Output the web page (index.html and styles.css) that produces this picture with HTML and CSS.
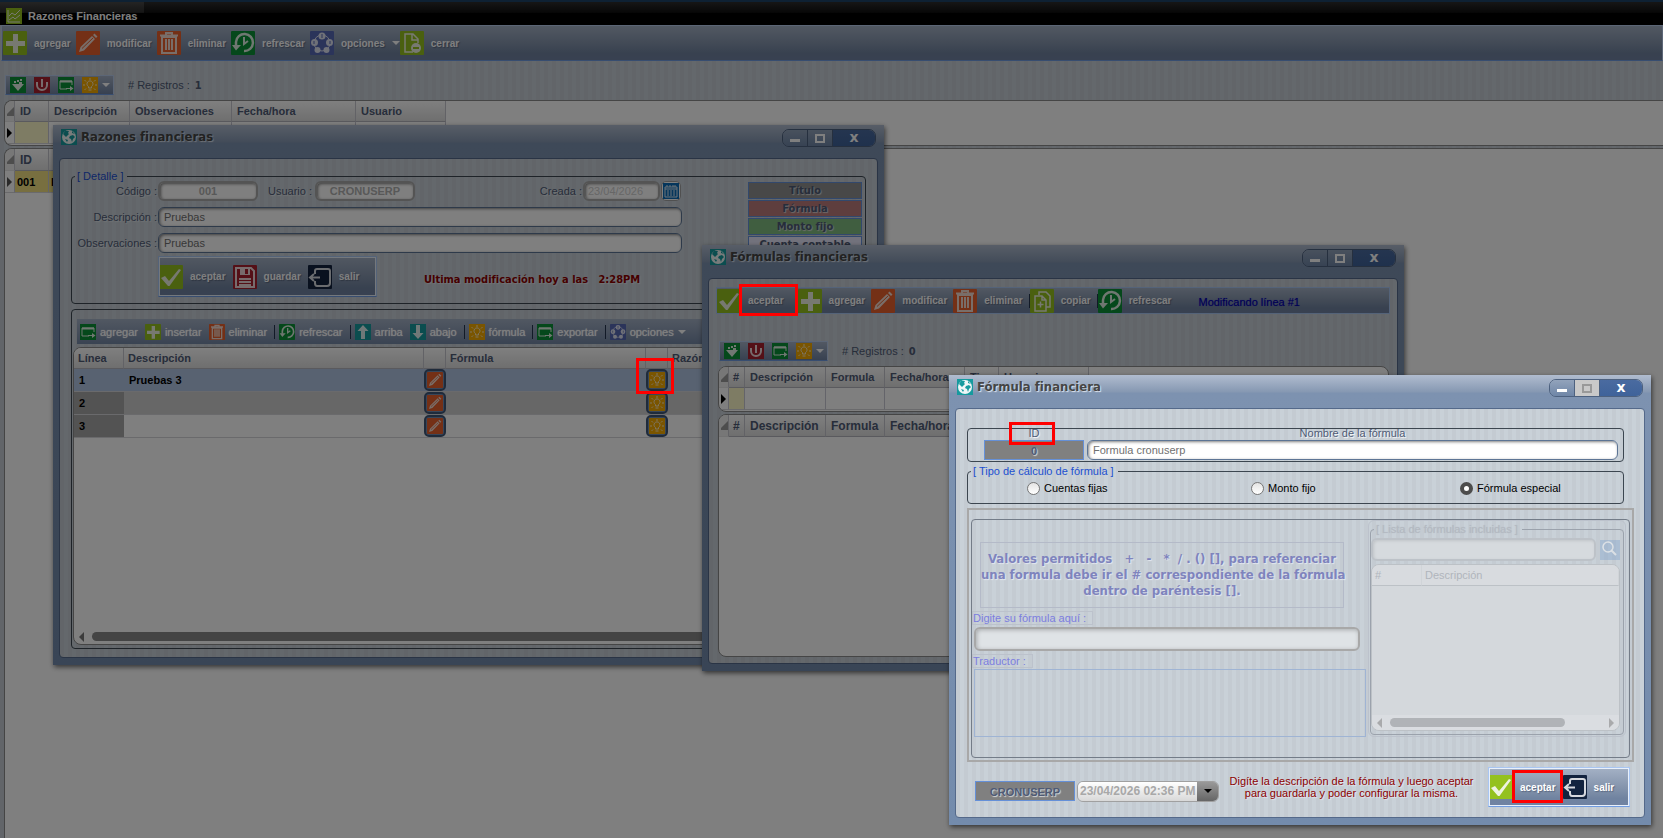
FILE: index.html
```html
<!DOCTYPE html>
<html lang="es">
<head>
    <meta charset="UTF-8">
    <meta name="viewport" content="width=device-width, initial-scale=1.0">
    <title>Razones Financieras</title>
    <link rel="stylesheet" href="styles.css">
</head>
<body>
    <svg class="sprite" aria-hidden="true">
        <symbol id="i-plus" viewBox="0 0 24 24"><rect width="24" height="24" rx="1" fill="#94c11f"/><path d="M10 3h5v7h7v5h-7v7h-5v-7H3v-5h7z" fill="#eef3e2"/></symbol>
        <symbol id="i-pencil" viewBox="0 0 24 24"><rect width="24" height="24" rx="1" fill="#e8602c"/><path d="M3 21l1.500-5L16 5l3 3L8 19.500zM17 4l1.500-1.500 3 3L20 7z" fill="#f3dcd2"/><path d="M6 17.500L17 7" stroke="#e8602c" fill="none"/></symbol>
        <symbol id="i-trash" viewBox="0 0 24 24"><rect width="24" height="24" rx="1" fill="#e8602c"/><path d="M3 4.500h18M9 4V2h6v2M5 6v16h14V6z" stroke="#f3dcd2" stroke-width="2" fill="none"/><path d="M9 8v11M12 8v11M15 8v11" stroke="#f3dcd2" stroke-width="2"/></symbol>
        <symbol id="i-refresh" viewBox="0 0 24 24"><rect width="24" height="24" rx="1" fill="#0b9136"/><path d="M5 14.500V11a8.500 8.500 0 1 1 8 9" stroke="#dfeee3" stroke-width="2.500" fill="none"/><path d="M1 14h9l-5 5.500z" fill="#dfeee3"/><path d="M13 6v7l4-3" stroke="#dfeee3" stroke-width="2" fill="none"/></symbol>
        <symbol id="i-options" viewBox="0 0 24 24"><rect width="24" height="24" rx="1" fill="#5768b4"/><circle cx="12" cy="12" r="8" stroke="#dfe2f0" fill="none"/><g fill="#dfe2f0"><circle cx="12" cy="5" r="3.500"/><circle cx="4.500" cy="11.500" r="3.500"/><circle cx="19.500" cy="11.500" r="3.500"/><circle cx="7.500" cy="19" r="3"/><circle cx="16.500" cy="19" r="3"/></g><path d="M12 3v4M4 10v3M20 10v3" stroke="#5768b4"/></symbol>
        <symbol id="i-close" viewBox="0 0 24 24"><rect width="24" height="24" rx="1" fill="#94c11f"/><path d="M13 21H5V3h8l5 5v4M12 3v6h6" stroke="#eef3e2" stroke-width="1.500" fill="none"/><circle cx="16" cy="17" r="5" fill="#eef3e2"/><path d="M13 17h6" stroke="#94c11f" stroke-width="2"/></symbol>
        <symbol id="i-check" viewBox="0 0 24 24"><rect width="24" height="24" rx="1" fill="#94c11f"/><path d="M2 13l4-2 4 5L20 4l2 1-11.500 16H9z" fill="#eef3e2"/></symbol>
        <symbol id="i-save" viewBox="0 0 24 24"><rect width="24" height="24" rx="1" fill="#a8202f"/><path d="M3 3h15l3 3v16H3z" stroke="#eed8da" stroke-width="2" fill="none"/><path d="M7 3h10v7H7z" fill="#eed8da"/><path d="M12 4h3v5h-3z" fill="#a8202f"/><path d="M6 14h12M6 17h12M6 20h12" stroke="#eed8da" stroke-width="2"/></symbol>
        <symbol id="i-exit" viewBox="0 0 24 24"><rect width="24" height="24" rx="1" fill="#12233f"/><path d="M7 9V6q0-2 2-2h11q2 0 2 2v12q0 3-3 3H9q-2 0-2-3v-2" stroke="#d5d8de" stroke-width="2" fill="none"/><path d="M12 12.500H3M6 9l-4 3.500L6 16" stroke="#d5d8de" stroke-width="2" fill="none"/></symbol>
        <symbol id="i-copy" viewBox="0 0 24 24"><rect width="24" height="24" rx="1" fill="#94c11f"/><path d="M9 6V3h7l4 4v11h-4M5 7h7l4 4v11H5zM12 7v4h4" stroke="#eef3e2" stroke-width="1.500" fill="none"/><path d="M10.500 12.500v6M7.500 15.500h6" stroke="#eef3e2" stroke-width="1.500"/></symbol>
        <symbol id="i-filter" viewBox="0 0 16 16"><rect width="16" height="16" fill="#0b9136"/><path d="M2 7h12l-6 7z" fill="#e4efe6"/><path d="M4 5h2M7 4h2M10 3h2M9 6h3" stroke="#e4efe6" stroke-width="2"/></symbol>
        <symbol id="i-power" viewBox="0 0 16 16"><rect width="16" height="16" fill="#a8202f"/><path d="M3 5v3a5 5 0 0 0 10 0V5M8 2v8" stroke="#eed8da" stroke-width="2" fill="none"/></symbol>
        <symbol id="i-export" viewBox="0 0 16 16"><rect width="16" height="16" fill="#0b9136"/><path d="M9 12H2V4h12v4" stroke="#dfeee3" fill="none"/><path d="M2 4.500h12" stroke="#dfeee3" stroke-width="2"/><path d="M8 11h4V9l3.500 2.500L12 14v-2H8z" fill="#dfeee3"/></symbol>
        <symbol id="i-bulb" viewBox="0 0 16 16"><rect width="16" height="16" fill="#f5ab00"/><path d="M6.500 11V9.500a3 3 0 1 1 3 0V11zM6.500 13h3" stroke="#fbe9c0" fill="none"/><path d="M8 1v2M2.500 3l1.500 1.500M13.500 3L12 4.500M1 8h2M13 8h2M2.500 13L4 11.500M13.500 13L12 11.500" stroke="#fbe9c0"/></symbol>
        <symbol id="i-up" viewBox="0 0 16 16"><rect width="16" height="16" fill="#169a9e"/><path d="M8 1l5.500 6H10v8H6V7H2.500z" fill="#dff0f1"/></symbol>
        <symbol id="i-down" viewBox="0 0 16 16"><rect width="16" height="16" fill="#169a9e"/><path d="M8 15L2.500 9H6V1h4v8h3.500z" fill="#dff0f1"/></symbol>
        <symbol id="i-globe" viewBox="0 0 16 16"><rect width="16" height="16" fill="#169a9e"/><circle cx="8" cy="8" r="7" fill="#eef6f7"/><path d="M2 5l2-3 4 0-1 2 1 1-2 2-1 1-2-2zM9 7l3-1 2 2-2 2-1 3-1-3-2-1zM11 2l3 3-3-1zM4 10l3 1-1 2z" fill="#169a9e"/></symbol>
        <symbol id="i-chart" viewBox="0 0 16 16"><rect width="16" height="16" fill="#94c11f"/><path d="M2 2v12h12M3 8l3-3 3 2 5-5M3 12l4-3 2 2 5-4" stroke="#eef3e2" fill="none"/></symbol>
        <symbol id="i-calendar" viewBox="0 0 16 16"><rect width="16" height="16" fill="#0a6cb8"/><path d="M2 4h12v10H2zM2 6h12M5 7v6M8 7v6M11 7v6" stroke="#dce8f3" fill="none"/><path d="M4 2v2M7 2v2M10 2v2M12 2v2" stroke="#dce8f3"/></symbol>
        <symbol id="i-search" viewBox="0 0 20 20"><rect width="20" height="20" fill="#7fa3cd"/><circle cx="8" cy="7" r="5" stroke="#fff" stroke-width="1.500" fill="none"/><path d="M11.500 10.500L16 15" stroke="#fff" stroke-width="2"/></symbol>
    </svg>

    <div class="desktop">
        <!-- pestaña principal -->
        <div class="tab-bar"><div class="tab"><svg class="ico16"><use href="#i-chart"/></svg>Razones Financieras</div></div>
        <div class="toolbar main-toolbar">
            <button class="tool"><svg><use href="#i-plus"/></svg>agregar</button>
            <button class="tool"><svg><use href="#i-pencil"/></svg>modificar</button>
            <button class="tool"><svg><use href="#i-trash"/></svg>eliminar</button>
            <button class="tool"><svg><use href="#i-refresh"/></svg>refrescar</button>
            <button class="tool has-arrow"><svg><use href="#i-options"/></svg>opciones<i class="arrow"></i></button>
            <button class="tool"><svg><use href="#i-close"/></svg>cerrar</button>
        </div>
        <div class="record-bar main-records">
            <div class="mini-toolbar">
                <button aria-label="filtrar"><svg class="ico16"><use href="#i-filter"/></svg></button>
                <button aria-label="quitar filtro"><svg class="ico16"><use href="#i-power"/></svg></button>
                <button aria-label="exportar"><svg class="ico16"><use href="#i-export"/></svg></button>
                <button aria-label="ayuda"><svg class="ico16"><use href="#i-bulb"/></svg></button>
                <i class="arrow"></i>
            </div>
            <span># Registros : </span><b>1</b>
        </div>
        <div class="main-grids">
            <div class="grid-box filter-box">
                <table class="grid main-grid">
                    <colgroup><col class="c-mark"><col class="c-id"><col class="c-desc"><col class="c-obs"><col class="c-date"><col class="c-user"></colgroup>
                    <tr><th class="corner"></th><th>ID</th><th>Descripción</th><th>Observaciones</th><th>Fecha/hora</th><th>Usuario</th></tr>
                    <tr><td class="mark"></td><td class="key"></td><td></td><td></td><td></td><td></td></tr>
                </table>
            </div>
            <div class="grid-box data-box">
                <table class="grid main-grid big">
                    <colgroup><col class="c-mark"><col class="c-id"><col class="c-desc"></colgroup>
                    <tr><th class="corner"></th><th>ID</th><th></th></tr>
                    <tr class="current"><td class="mark"></td><td>001</td><td>Pruebas</td></tr>
                </table>
            </div>
        </div>

        <section class="window win-ratios">
            <header class="title-bar">
                <svg class="ico16"><use href="#i-globe"/></svg><h2>Razones financieras</h2>
                <div class="controls"><button class="min" aria-label="minimizar"></button><button class="max" aria-label="maximizar"></button><button class="x" aria-label="cerrar">x</button></div>
            </header>
            <div class="client">
                <fieldset class="group detail">
                    <legend>[ Detalle ]</legend>
                    <div class="detail-main">
                        <div class="row">
                            <label for="codigo">Código :</label><input id="codigo" class="field code" value="001" disabled>
                            <label for="usuario" class="user-label">Usuario :</label><input id="usuario" class="field code" value="CRONUSERP" disabled>
                            <label for="creada" class="created-label">Creada :</label><input id="creada" class="field date" value="23/04/2026" disabled>
                            <button class="calendar" aria-label="calendario"><svg class="ico16"><use href="#i-calendar"/></svg></button>
                        </div>
                        <div class="row"><label for="desc">Descripción :</label><input id="desc" class="field wide" value="Pruebas"></div>
                        <div class="row"><label for="obs">Observaciones :</label><input id="obs" class="field wide" value="Pruebas"></div>
                        <div class="row actions">
                            <div class="toolbar boxed">
                                <button class="tool"><svg><use href="#i-check"/></svg>aceptar</button>
                                <button class="tool"><svg><use href="#i-save"/></svg>guardar</button>
                                <button class="tool"><svg><use href="#i-exit"/></svg>salir</button>
                            </div>
                            <p class="modified">Ultima modificación hoy a las&nbsp;&nbsp; 2:28PM</p>
                        </div>
                    </div>
                    <div class="legend-list">
                        <span class="k-title">Título</span><span class="k-formula">Fórmula</span><span class="k-fixed">Monto fijo</span><span class="k-account">Cuenta contable</span>
                    </div>
                </fieldset>
                <div class="group lines">
                    <div class="line-toolbar">
                        <button><svg class="ico16"><use href="#i-export"/></svg>agregar</button>
                        <button><svg class="ico16"><use href="#i-plus"/></svg>insertar</button>
                        <button><svg class="ico16"><use href="#i-trash"/></svg>eliminar</button>
                        <i class="sep"></i>
                        <button><svg class="ico16"><use href="#i-refresh"/></svg>refrescar</button>
                        <i class="sep"></i>
                        <button><svg class="ico16"><use href="#i-up"/></svg>arriba</button>
                        <button><svg class="ico16"><use href="#i-down"/></svg>abajo</button>
                        <i class="sep"></i>
                        <button><svg class="ico16"><use href="#i-bulb"/></svg>fórmula</button>
                        <i class="sep"></i>
                        <button><svg class="ico16"><use href="#i-export"/></svg>exportar</button>
                        <i class="sep"></i>
                        <button><svg class="ico16"><use href="#i-options"/></svg>opciones<i class="arrow"></i></button>
                    </div>
                    <div class="grid-box lines-box">
                        <table class="grid line-grid">
                            <colgroup><col class="l-line"><col class="l-desc"><col class="l-btn"><col class="l-formula"><col class="l-btn"><col></colgroup>
                            <tr><th>Línea</th><th>Descripción</th><th></th><th>Fórmula</th><th></th><th>Razón</th></tr>
                            <tr class="selected"><td>1</td><td>Pruebas 3</td><td><button class="cell"><svg class="ico16"><use href="#i-pencil"/></svg></button></td><td></td><td><button class="cell"><svg class="ico16"><use href="#i-bulb"/></svg></button></td><td></td></tr>
                            <tr class="alt"><td>2</td><td></td><td><button class="cell"><svg class="ico16"><use href="#i-pencil"/></svg></button></td><td></td><td><button class="cell"><svg class="ico16"><use href="#i-bulb"/></svg></button></td><td></td></tr>
                            <tr><td>3</td><td></td><td><button class="cell"><svg class="ico16"><use href="#i-pencil"/></svg></button></td><td></td><td><button class="cell"><svg class="ico16"><use href="#i-bulb"/></svg></button></td><td></td></tr>
                        </table>
                        <div class="scroll"><i class="left"></i><span class="thumb"></span></div>
                    </div>
                </div>
            </div>
        </section>

        <section class="window win-formulas">
            <header class="title-bar">
                <svg class="ico16"><use href="#i-globe"/></svg><h2>Fórmulas financieras</h2>
                <div class="controls"><button class="min" aria-label="minimizar"></button><button class="max" aria-label="maximizar"></button><button class="x" aria-label="cerrar">x</button></div>
            </header>
            <div class="client">
                <div class="toolbar formulas-toolbar">
                    <button class="tool accept"><svg><use href="#i-check"/></svg>aceptar</button>
                    <button class="tool"><svg><use href="#i-plus"/></svg>agregar</button>
                    <button class="tool"><svg><use href="#i-pencil"/></svg>modificar</button>
                    <button class="tool"><svg><use href="#i-trash"/></svg>eliminar</button>
                    <i class="sep"></i>
                    <button class="tool"><svg><use href="#i-copy"/></svg>copiar</button>
                    <i class="sep"></i>
                    <button class="tool"><svg><use href="#i-refresh"/></svg>refrescar</button>
                    <span class="editing">Modificando línea #1</span>
                </div>
                <div class="record-bar">
                    <div class="mini-toolbar">
                        <button aria-label="filtrar"><svg class="ico16"><use href="#i-filter"/></svg></button>
                        <button aria-label="quitar filtro"><svg class="ico16"><use href="#i-power"/></svg></button>
                        <button aria-label="exportar"><svg class="ico16"><use href="#i-export"/></svg></button>
                        <button aria-label="ayuda"><svg class="ico16"><use href="#i-bulb"/></svg></button>
                        <i class="arrow"></i>
                    </div>
                    <span># Registros : </span><b>0</b>
                </div>
                <div class="grid-box filter-box">
                    <table class="grid formula-grid">
                        <colgroup><col class="c-mark"><col class="f-num"><col class="c-desc"><col class="f-formula"><col class="f-date"><col class="f-type"><col class="c-user"></colgroup>
                        <tr><th class="corner"></th><th>#</th><th>Descripción</th><th>Formula</th><th>Fecha/hora</th><th>Tipo</th><th>Usuario</th></tr>
                        <tr><td class="mark"></td><td class="key"></td><td></td><td></td><td></td><td></td><td></td></tr>
                    </table>
                </div>
                <div class="grid-box data-box">
                    <table class="grid formula-grid big">
                        <colgroup><col class="c-mark"><col class="f-num"><col class="c-desc"><col class="f-formula"><col class="f-date"><col class="f-type"><col class="c-user"></colgroup>
                        <tr><th class="corner"></th><th>#</th><th>Descripción</th><th>Formula</th><th>Fecha/hora</th><th></th><th></th></tr>
                    </table>
                </div>
            </div>
        </section>

        <div class="shade"></div>

        <section class="window win-editor">
            <header class="title-bar">
                <svg class="ico16"><use href="#i-globe"/></svg><h2>Fórmula financiera</h2>
                <div class="controls"><button class="min" aria-label="minimizar"></button><button class="max off" aria-label="maximizar" disabled></button><button class="x" aria-label="cerrar">x</button></div>
            </header>
            <div class="client">
                <div class="group name-group">
                    <div class="name-id"><span>ID</span><output class="tag">0</output></div>
                    <div class="name-field"><label for="nombre">Nombre de la fórmula</label><input id="nombre" class="field" value="Formula cronuserp"></div>
                </div>
                <fieldset class="group type-group">
                    <legend>[ Tipo de cálculo de fórmula ]</legend>
                    <label><input type="radio" name="tipo">Cuentas fijas</label>
                    <label><input type="radio" name="tipo">Monto fijo</label>
                    <label><input type="radio" name="tipo" checked>Fórmula especial</label>
                </fieldset>
                <div class="special">
                    <div class="special-inner">
                        <div class="formula-side">
                            <p class="help">Valores permitidos&nbsp;&nbsp; +&nbsp;&nbsp; -&nbsp;&nbsp; *&nbsp; / . () [], para referenciar<br>una formula debe ir el # correspondiente de la fórmula<br>dentro de paréntesis [].</p>
                            <label for="formula" class="faded-label">Digite su fórmula aquí :</label>
                            <input id="formula" class="field" disabled>
                            <label for="traductor" class="faded-label">Traductor :</label>
                            <textarea id="traductor" disabled></textarea>
                        </div>
                        <fieldset class="list-side">
                            <legend>[ Lista de fórmulas incluidas ]</legend>
                            <div class="search-row"><input class="field" aria-label="Buscar" disabled><button aria-label="buscar" disabled><svg><use href="#i-search"/></svg></button></div>
                            <div class="grid-box">
                                <table class="grid"><colgroup><col class="s-num"><col></colgroup><tr><th>#</th><th>Descripción</th></tr></table>
                                <div class="scroll"><i class="left"></i><span class="thumb"></span><i class="right"></i></div>
                            </div>
                        </fieldset>
                    </div>
                </div>
                <footer class="editor-foot">
                    <output class="tag">CRONUSERP</output>
                    <div class="stamp"><input value="23/04/2026 02:36 PM" aria-label="Fecha" disabled><button aria-label="abrir calendario"><i class="arrow"></i></button></div>
                    <p class="notice">Digíte la descripción de la fórmula y luego aceptar<br>para guardarla y poder configurar la misma.</p>
                    <div class="toolbar boxed">
                        <button class="tool"><svg><use href="#i-check"/></svg>aceptar</button>
                        <button class="tool"><svg><use href="#i-exit"/></svg>salir</button>
                    </div>
                </footer>
            </div>
        </section>

        <!-- marcas -->
        <i class="callout co-bulb"></i>
        <i class="callout co-accept"></i>
        <i class="callout co-id"></i>
        <i class="callout co-save"></i>
    </div>
</body>
</html>
```
FILE: styles.css
```css
*, *::before {
    margin: 0;
    padding: 0;
    box-sizing: border-box;
}

body {
    font-family: "Liberation Sans", Arial, sans-serif;
    font-size: 11px;
    color: #4e5a75;
    overflow: hidden;
}

button, input, textarea {
    font: inherit;
}

button {
    border: none;
    background: none;
}

.sprite {
    position: absolute;
    width: 0;
    height: 0;
}

.ico16 {
    width: 16px;
    height: 16px;
    flex: none;
    display: block;
}

.desktop {
    position: relative;
    min-height: 100vh;
    display: flex;
    flex-direction: column;
    overflow: hidden;
    background: repeating-linear-gradient(90deg, #c4cbd2 0 4px, #c9d1d8 4px 8px);
}

/* barra superior */
.tab-bar {
    height: 25px;
    border-top: 2px solid #1c4266;
    background: linear-gradient(#2c2c2c, #101010 45%, #000 50%);
}

.tab {
    width: 144px;
    height: 23px;
    padding: 4px 0 0 6px;
    display: flex;
    align-items: center;
    gap: 6px;
    background: linear-gradient(#484848, #2c2c2c 45%, #000 50%);
    color: #fff;
    font-weight: bold;
}

.toolbar {
    display: flex;
    align-items: center;
    background: linear-gradient(#a4b1c5, #8595ad 50%, #7083a0 80%, #7083a3);
}

.main-toolbar {
    height: 36px;
    margin-left: 1px;
    padding-left: 1px;
    border: 1px solid #b9cdec;
    border-bottom-color: #6f9be0;
}

.tool {
    display: flex;
    align-items: center;
    gap: 7px;
    padding-right: 6px;
    color: #fff;
    font-size: 10px;
    font-weight: bold;
    text-shadow: 1px 1px 1px #5b6880;
}

.tool svg {
    width: 24px;
    height: 24px;
}

.main-toolbar .tool {
    padding-right: 5px;
}

.arrow {
    border: 4px solid transparent;
    border-top-color: #fff;
    border-bottom: none;
}

.main-toolbar .has-arrow {
    padding-right: 0;
}

.sep {
    width: 1px;
    height: 14px;
    background: #24344f;
}

.record-bar {
    display: flex;
    align-items: center;
    color: #4e5a75;
}

.record-bar b {
    margin-left: 5px;
    font-family: "DejaVu Sans Condensed", "DejaVu Sans", sans-serif;
}

.main-records {
    margin: 14px 0 5px 5px;
}

.mini-toolbar {
    display: flex;
    align-items: center;
    gap: 8px;
    width: 109px;
    height: 20px;
    padding-left: 4px;
    margin-right: 14px;
    border: 1px solid #b9cdec;
    border-bottom-color: #6f9be0;
    background: linear-gradient(#a4b1c5, #6f82a1);
}

.mini-toolbar .arrow {
    margin-left: -4px;
}

/* tablas */
.grid-box {
    background: #fff;
    border: 1px solid #8a8a8a;
    border-radius: 8px;
    overflow: hidden;
}

.main-grids {
    flex: 1;
    display: flex;
    flex-direction: column;
    padding-left: 4px;
}

.main-grids .grid-box {
    border-right: none;
    border-radius: 8px 0 0 8px;
}

.main-grids .data-box {
    border-bottom: none;
    border-radius: 8px 0 0 0;
}

.filter-box {
    height: 46px;
    margin-bottom: 2px;
}

.data-box {
    flex: 1;
}

.grid {
    border-collapse: separate;
    border-spacing: 0;
    table-layout: fixed;
    width: 100%;
    font-weight: bold;
}

.grid th {
    height: 21px;
    padding-left: 5px;
    text-align: left;
    white-space: nowrap;
    background: linear-gradient(#fff, #dedede);
    border-right: 1px solid #c4c4cc;
    border-bottom: 1px solid #b4b4bc;
}

.grid td {
    height: 22px;
    padding-left: 2px;
    border-right: 1px solid #c8c8d4;
    border-bottom: 1px solid #d4d4d8;
    color: #000;
}

.main-grid {
    width: 441px;
}

.main-grid.big {
    width: 125px;
}

.grid.big th {
    height: 22px;
    font-size: 12px;
}

.c-mark { width: 10px; }
.c-id { width: 34px; }
.c-desc { width: 81px; }
.c-obs { width: 102px; }
.c-date { width: 124px; }
.c-user { width: 90px; }
.f-num { width: 16px; }
.f-formula { width: 59px; }
.f-date { width: 80px; }
.f-type { width: 34px; }

.grid th.corner {
    padding: 0;
    background: linear-gradient(135deg, #eee 50%, #9a9a9a 55%) right 3px / 7px 12px no-repeat #eee;
    border-bottom-color: #e4e4e4;
}

.mark::before {
    content: "";
    display: block;
    width: 0;
    border: 5px solid transparent;
    border-left-color: #000;
    border-right: none;
}

.current .mark::before {
    border-left-color: #555;
}

.key {
    background: #fdf8c8;
}

.current td:not(.mark) {
    background: #f0df80;
}

/* ventanas */
.window {
    position: absolute;
    display: flex;
    flex-direction: column;
    padding: 0 6px 7px;
    background: linear-gradient(#b0bccf, #8698b2 17px, #7d92b0 18px, #738bac);
    box-shadow: 1px 2px 5px rgba(0, 0, 0, 0.6);
}

.win-ratios {
    left: 53px;
    top: 125px;
    width: 831px;
    height: 540px;
}

.win-formulas {
    left: 702px;
    top: 245px;
    width: 702px;
    height: 426px;
}

.win-editor {
    left: 949px;
    top: 375px;
    width: 702px;
    height: 450px;
}

.title-bar {
    display: flex;
    gap: 4px;
    height: 33px;
    padding: 4px 2px 0;
}

.title-bar h2 {
    flex: 1;
    font: bold 13px/16px "DejaVu Sans Condensed", "DejaVu Sans", sans-serif;
    color: #454545;
    text-shadow: 1px 1px 1px #dfe5ee;
}

.controls {
    display: flex;
    height: 18px;
    border: 1px solid #4d617f;
    border-radius: 7px;
    overflow: hidden;
}

.controls button {
    width: 25px;
    border-right: 1px solid #4d617f;
    display: flex;
    align-items: center;
    justify-content: center;
    background: linear-gradient(#92a3bb, #6f86a7);
}

.controls .min::before {
    content: "";
    width: 10px;
    height: 3px;
    margin-top: 4px;
    background: #fff;
}

.controls .max::before {
    content: "";
    width: 10px;
    height: 9px;
    border: 2px solid #fff;
}

.controls .off {
    background: #c9c9c9;
}

.controls .off::before {
    border-color: #999;
}

.controls .x {
    width: 42px;
    border: none;
    background: linear-gradient(#4a6ba0, #3f639a);
    color: #fff;
    font: bold 14px/14px "DejaVu Sans", sans-serif;
    padding-bottom: 2px;
}

.client {
    flex: 1;
    min-height: 0;
    display: flex;
    flex-direction: column;
    border: 1px solid #54698a;
    border-radius: 4px;
    background: repeating-linear-gradient(90deg, #c4cbd2 0 4px, #c9d1d8 4px 8px);
}

.group {
    min-width: 0;
    border: 1px solid #3c4650;
    border-radius: 4px;
}

legend {
    margin-left: 3px;
    padding: 0 4px 0 2px;
    line-height: 12px;
    color: #1c4fd0;
}

.field {
    height: 20px;
    padding: 0 5px;
    border: 1px solid #5d7595;
    border-radius: 6px;
    background: #fff;
    box-shadow: inset 1px 1px 3px rgba(0, 0, 0, 0.5);
    color: #707070;
    min-width: 0;
}

.field:disabled {
    border: 2px solid #a8a8a8;
    color: #b0b0b0;
}

/* razones financieras */
.win-ratios .client {
    padding: 11px 11px 8px;
}

.detail {
    height: 134px;
    display: flex;
    justify-content: space-between;
}

.detail-main {
    flex: 1;
    margin-top: -1px;
}

.row {
    display: flex;
    align-items: center;
    margin-bottom: 6px;
    text-shadow: 1px 1px 1px #e4e8ec;
}

.row label {
    width: 86px;
    text-align: right;
    padding-right: 1px;
}

.row .user-label {
    width: 57px;
    padding-right: 3px;
}

.row .created-label {
    width: 168px;
}

.code {
    width: 100px;
    text-align: center;
    font-weight: bold;
}

.row .date {
    width: 77px;
    padding: 0 3px;
    color: #cdcdcd;
}

.wide {
    width: 524px;
}

.calendar {
    width: 20px;
    height: 20px;
    margin-left: 1px;
    padding: 1px;
    border: 1px solid #a0a0a0;
    border-radius: 5px;
    background: #fff;
}

.actions {
    margin: -3px 0 0 86px;
}

.boxed {
    border: 1px solid #a9c6f2;
    outline: 1px solid #e8f0fb;
    outline-offset: -2px;
    border-bottom-color: #6f9be0;
}

.actions .boxed {
    width: 219px;
    height: 41px;
}

.boxed .tool {
    padding-right: 7px;
}

.modified {
    margin: 5px 0 0 47px;
    font: bold 11px "DejaVu Sans Condensed", "DejaVu Sans", sans-serif;
    color: #8c0000;
}

.legend-list {
    width: 114px;
    margin-right: 3px;
    font: bold 11px/15px "DejaVu Sans Condensed", "DejaVu Sans", sans-serif;
    text-align: center;
    text-shadow: 1px 1px 1px #d8d8d8;
}

.legend-list span {
    display: block;
    height: 17px;
    margin-bottom: 1px;
    border: 1px solid #6590d8;
}

.k-title { background: #909090; }
.k-formula { background: #bc7c7c; }
.k-fixed { background: #80bc80; }
.k-account { background: #e6e6fa; }

.lines {
    flex: 1;
    display: flex;
    flex-direction: column;
    margin-top: 5px;
    padding: 9px 6px 3px 1px;
}

.line-toolbar {
    display: flex;
    align-items: center;
    gap: 4px;
    height: 25px;
    margin-left: 4px;
    padding-left: 3px;
    background: linear-gradient(#a4b1c5, #7487a5);
}

.line-toolbar button {
    display: flex;
    align-items: center;
    gap: 4px;
    padding-right: 3px;
    color: #fff;
    font-size: 11px;
    text-shadow: 0 0 1px #fff;
}

.line-toolbar .sep {
    height: 14px;
}

.lines-box {
    flex: 1;
    display: flex;
    flex-direction: column;
    margin-top: 3px;
}

.l-line { width: 50px; }
.l-desc { width: 300px; }
.l-btn { width: 22px; }
.l-formula { width: 200px; }

.line-grid th {
    padding-left: 4px;
}

.line-grid td {
    height: 23px;
    padding-left: 5px;
    border-right: none;
}

.line-grid td:has(.cell) {
    padding: 0;
}

.line-grid td:first-child {
    background: #a6a6a6;
}

.line-grid .alt td {
    background: #cfcfcf;
}

.line-grid .alt td:first-child {
    background: #a6a6a6;
}

.line-grid .selected td, .line-grid .selected td:first-child {
    background: #b0c4e2;
}

.cell {
    display: block;
    width: 22px;
    height: 22px;
    padding: 1px;
    border: 2px solid #3f5677;
    border-radius: 5px;
    background: #6f8cb4;
}

.scroll {
    display: flex;
    align-items: center;
    gap: 8px;
    height: 15px;
    margin-top: auto;
    padding: 0 5px;
}

.scroll i {
    border: 5px solid transparent;
}

.scroll .left {
    border-right-color: #777;
    border-left: none;
}

.scroll .right {
    border-left-color: #777;
    border-right: none;
    margin-left: auto;
}

.thumb {
    flex: 1;
    height: 9px;
    border-radius: 5px;
    background: #888;
}

/* fórmulas financieras */
.win-formulas .client {
    padding: 8px 7px 4px;
}

.formulas-toolbar {
    height: 27px;
    border: 1px solid #a9c6f2;
}

.accept {
    padding-right: 14px;
}

.editing {
    margin-left: 21px;
    padding-top: 3px;
    color: #0000a8;
    text-shadow: 0 0 1px #4040c0;
}

.win-formulas .record-bar {
    margin: 27px 0 5px 3px;
}

.win-formulas .grid-box {
    margin: 0 1px 2px 2px;
}

.formula-grid {
    width: 370px;
}

.formula-grid th:nth-child(2) {
    padding-left: 4px;
}

.shade {
    position: absolute;
    inset: 0;
    background: rgba(0, 0, 0, 0.5);
}

/* fórmula financiera */
.win-editor .client {
    padding: 19px 10px 10px 11px;
}

.name-group {
    display: flex;
    height: 34px;
    margin-right: 10px;
    padding: 0 5px 0 16px;
    gap: 3px;
    text-shadow: 1px 1px 1px #fff;
    text-align: center;
}

.name-id {
    width: 100px;
}

.name-field {
    flex: 1;
}

.name-id span, .name-field label {
    display: block;
    height: 11px;
    line-height: 8px;
}

.name-field .field {
    width: 100%;
}

.tag {
    display: block;
    height: 20px;
    border: 1px solid #6590d8;
    background: #808080;
    font-weight: bold;
    line-height: 20px;
    text-align: center;
    text-shadow: 1px 1px 1px #d8d8d8;
}

.type-group {
    display: grid;
    grid-template-columns: 224px 209px 1fr;
    height: 39px;
    margin: 3px 10px 4px 0;
    padding-left: 59px;
    color: #000;
}

.type-group legend {
    margin-left: -56px;
}

.type-group label {
    display: flex;
    align-items: center;
    gap: 4px;
    height: 22px;
}

.type-group input {
    appearance: none;
    width: 13px;
    height: 13px;
    border: 1px solid #777;
    border-radius: 50%;
    background: linear-gradient(#e4e4e4, #fff);
}

.type-group input:checked {
    border: 4px solid #4c4c4c;
    background: #fff;
}

.special {
    flex: 1;
    min-height: 0;
    display: flex;
    padding: 9px 2px 2px;
    border: 2px solid #a8a8a8;
}

.special-inner {
    flex: 1;
    display: flex;
    gap: 4px;
    padding: 0 5px 20px 0;
    border: 1px solid #737c88;
    border-radius: 4px;
}

.formula-side {
    flex: 1;
    display: flex;
    flex-direction: column;
    align-items: flex-start;
}

.help {
    width: 364px;
    height: 66px;
    margin: 22px 0 3px 8px;
    padding-top: 8px;
    border: 1px solid #b4bac8;
    color: #7f84bd;
    font: bold 13px/16px "DejaVu Sans Condensed", "DejaVu Sans", sans-serif;
    text-align: center;
    text-shadow: 1px 1px 1px #e4e8f0;
    white-space: nowrap;
}

.faded-label {
    height: 14px;
    padding: 0 6px 0 0;
    border: 1px solid #bcc2cc;
    color: #7c7ee0;
    line-height: 12px;
}

.formula-side .field {
    width: 386px;
    height: 24px;
    margin: 2px 0 3px 2px;
    background: #dfe3e6;
    box-shadow: inset 1px 1px 4px rgba(0, 0, 0, 0.25);
}

.formula-side textarea {
    align-self: stretch;
    flex: 1;
    margin: 1px 0 0 2px;
    border: 1px solid #9fb4d4;
    background: transparent;
    resize: none;
}

.list-side {
    display: flex;
    flex-direction: column;
    width: 254px;
    height: 213px;
    margin-top: 2px;
    border: 1px solid #9ba2ac;
    border-radius: 4px;
    outline: 1px solid #bcc2cc;
    outline-offset: 1px;
}

.list-side legend {
    color: #b4bac2;
    height: 14px;
    line-height: 14px;
    text-shadow: 0 0 1px #b4bac2;
}

.search-row {
    display: flex;
    justify-content: space-between;
    padding: 2px 3px 0 0;
}

.search-row .field {
    width: 225px;
    height: 23px;
    border-color: #bdc2c8;
    background: #d6dade;
    box-shadow: inset 1px 1px 3px rgba(0, 0, 0, 0.1);
}

.search-row svg {
    display: block;
    width: 20px;
    height: 20px;
    opacity: 0.4;
}

.list-side .grid-box {
    display: flex;
    flex-direction: column;
    height: 167px;
    margin: 3px 3px 0 0;
    border-color: #bcc1c6;
    background: #d4d8dc;
}

.s-num { width: 50px; }

.list-side th {
    padding-left: 3px;
    background: #d8dbdf;
    border-bottom-color: #bcc1c6;
    border-right-color: #d0d4d8;
    color: #b0b5bc;
    font-weight: normal;
}

.list-side .scroll {
    background: #dadde1;
}

.list-side .scroll i {
    opacity: 0.5;
}

.list-side .thumb {
    flex: none;
    width: 175px;
    background: #b0b3b7;
}

.editor-foot {
    display: flex;
    align-items: center;
    height: 40px;
    margin: 5px 4px 0 8px;
}

.editor-foot .tag {
    width: 100px;
    margin: 8px 2px 0 0;
}

.stamp {
    display: flex;
    width: 142px;
    height: 21px;
    margin-top: 8px;
    border: 1px solid #a0a0a0;
    border-radius: 6px;
    overflow: hidden;
}

.stamp input {
    flex: 1;
    min-width: 0;
    padding-left: 2px;
    border: none;
    background: linear-gradient(#fff, #d8d8d8);
    color: #a8a8a8;
    font-size: 12px;
    font-weight: bold;
}

.stamp button {
    width: 21px;
    display: flex;
    align-items: center;
    justify-content: center;
    background: linear-gradient(#999, #666);
}

.stamp .arrow {
    border-top-color: #000;
}

.notice {
    flex: 1;
    padding-right: 4px;
    color: #8c0000;
    line-height: 12px;
    text-align: center;
    text-shadow: 1px 1px 1px #e4e8f0;
}

.editor-foot .boxed {
    width: 142px;
    height: 40px;
}

/* recuadros rojos */
.callout {
    position: absolute;
    border: 3px solid #f00;
}

.co-bulb {
    left: 636px;
    top: 358px;
    width: 38px;
    height: 36px;
}

.co-accept {
    left: 739px;
    top: 284px;
    width: 59px;
    height: 32px;
}

.co-id {
    left: 1009px;
    top: 422px;
    width: 46px;
    height: 23px;
}

.co-save {
    left: 1512px;
    top: 770px;
    width: 51px;
    height: 33px;
}
```
